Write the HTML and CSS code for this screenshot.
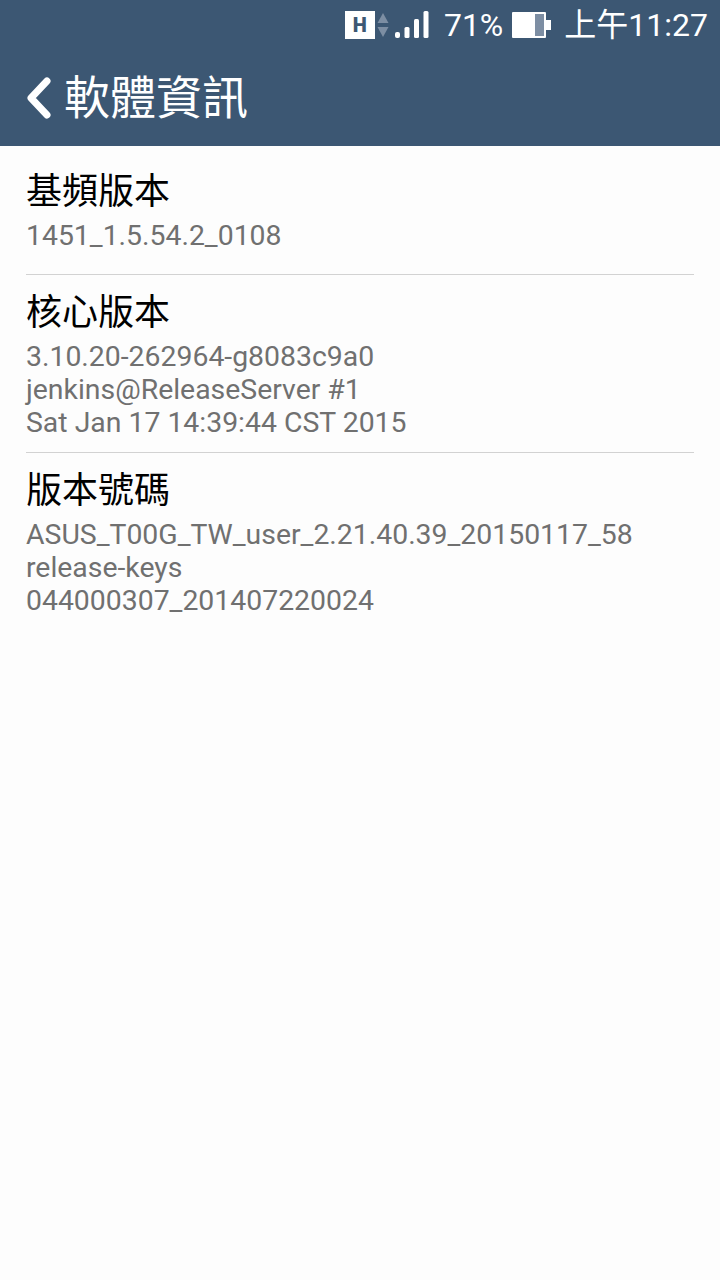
FILE: index.html
```html
<!DOCTYPE html>
<html>
<head>
	<title>軟體資訊</title>
	<link rel="stylesheet" href="styles.css">
</head>
<body>
	<header class="header">
		<div class="status-bar">
			<span class="net-badge">H</span>
			<svg class="arrows" width="12" height="28" viewBox="0 0 12 28">
				<path d="M6 2 L11.5 12 H0.5 Z" fill="#7d8ea3"/>
				<path d="M0.5 16 H11.5 L6 26 Z" fill="#7d8ea3"/>
			</svg>
			<svg class="signal" width="34" height="30" viewBox="0 0 34 30">
				<rect x="0" y="22" width="5" height="6" rx="2" fill="#fff"/>
				<rect x="9.500" y="17" width="5" height="11" rx="1.500" fill="#fff"/>
				<rect x="19" y="9" width="5" height="19" rx="1.500" fill="#fff"/>
				<rect x="28.500" y="1" width="5" height="27" rx="1.500" fill="#fff"/>
			</svg>
			<span class="battery-text">71%</span>
			<svg class="battery" width="39" height="26" viewBox="0 0 39 26">
				<rect x="0" y="0" width="34" height="26" rx="1" fill="#fff"/>
				<rect x="23" y="2" width="9" height="22" fill="#7d8ea3"/>
				<rect x="34" y="8" width="5" height="10" fill="#fff"/>
			</svg>
			<span class="clock">上午11:27</span>
		</div>
		<div class="action-bar">
			<svg class="back" width="26" height="42" viewBox="0 0 26 42">
				<path d="M21 4 L5 21 L21 38" fill="none" stroke="#fff" stroke-width="7" stroke-linecap="round" stroke-linejoin="round"/>
			</svg>
			<h1 class="title">軟體資訊</h1>
		</div>
	</header>
	<main class="list">
		<section class="item item-first">
			<h2 class="item-title">基頻版本</h2>
			<p class="item-text">1451_1.5.54.2_0108</p>
		</section>
		<section class="item">
			<h2 class="item-title">核心版本</h2>
			<p class="item-text">3.10.20-262964-g8083c9a0<br>jenkins@ReleaseServer #1<br>Sat Jan 17 14:39:44 CST 2015</p>
		</section>
		<section class="item">
			<h2 class="item-title">版本號碼</h2>
			<p class="item-text">ASUS_T00G_TW_user_2.21.40.39_20150117_58<br>release-keys<br>044000307_201407220024</p>
		</section>
	</main>
</body>
</html>
```

FILE: styles.css
```css
body {
	margin: 0;
	padding: 0;
	background: #fdfdfd;
	font-family: Roboto, "Noto Sans CJK TC", sans-serif;
	width: 720px;
	height: 1280px;
	overflow: hidden;
}
.header {
	background: #3c5773;
	height: 146px;
	color: #fff;
}
.status-bar {
	height: 50px;
	display: flex;
	align-items: center;
	justify-content: flex-end;
	padding-right: 12px;
}
.net-badge {
	width: 30px;
	height: 28px;
	background: #fff;
	color: #3c5773;
	font-size: 20px;
	font-weight: 900;
	line-height: 28px;
	text-align: center;
	margin-right: 2px;
}
.arrows {
	margin-right: 6px;
}
.signal {
	margin-right: 15px;
}
.battery-text {
	font-size: 32px;
	line-height: 50px;
	margin-right: 9px;
}
.battery {
	margin-right: 13px;
}
.clock {
	font-size: 32px;
	line-height: 50px;
	height: 50px;
}
.action-bar {
	height: 96px;
	display: flex;
	align-items: center;
	padding-left: 26px;
}
.back {
	margin-right: 12px;
}
.title {
	margin: 0;
	font-size: 46px;
	font-weight: 400;
	line-height: 96px;
}
.list {
	padding: 0 26px;
}
.item {
	border-bottom: 1px solid #d2d2d2;
	padding: 16px 0 13px;
}
.item-first {
	padding: 24px 0 22px;
}
.item:last-child {
	border-bottom: none;
}
.item-title {
	margin: 0 0 5px;
	font-size: 36px;
	font-weight: 400;
	line-height: 44px;
	color: #000;
}
.item-text {
	margin: 0;
	font-size: 28.4px;
	line-height: 33px;
	color: #707070;
}
```
